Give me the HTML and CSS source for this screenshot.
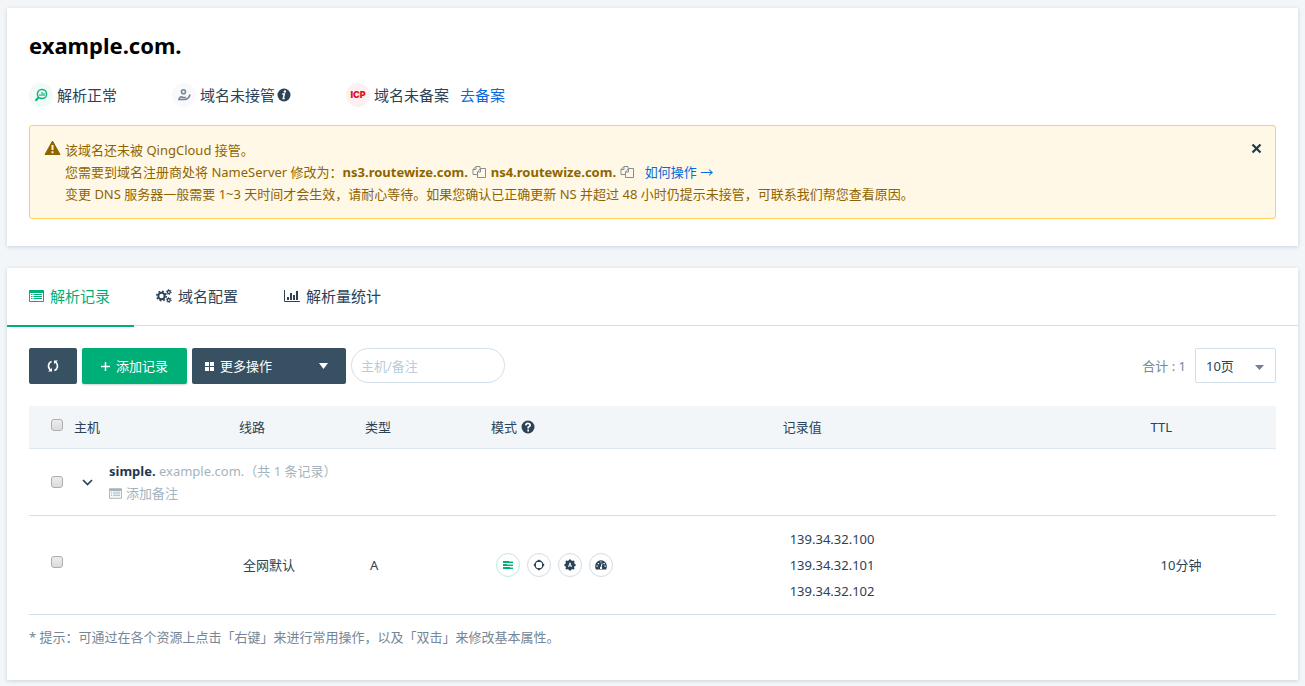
FILE: index.html
```html
<!DOCTYPE html>
<html lang="zh-CN">
<head>
<meta charset="utf-8">
<title>example.com. - 解析记录</title>
<link rel="stylesheet" href="styles.css">
</head>
<body>
<svg class="defs" aria-hidden="true">
  <symbol id="i-list" viewBox="0 0 15 12"><path fill="currentColor" fill-rule="evenodd" d="M1 0h13q1 0 1 1v10q0 1-1 1H1q-1 0-1-1V1q0-1 1-1zM1 3v8h13V3z"/><path stroke="currentColor" d="M2 4.500h1.500M4.500 4.500H13M2 6.500h1.500M4.500 6.500H13M2 8.500h1.500M4.500 8.500H13"/></symbol>
  <symbol id="i-copy" viewBox="0 0 14 14"><path fill="none" stroke="currentColor" stroke-linejoin="round" d="M4 1.500 1 4.500V9.500H5.500M4 1.500h4v2M4 1.500v3H1M8.500 3.500 5.500 7v5.500h8v-9zM8.500 3.500V7h-3"/></symbol>
</svg>

<main class="page">
  <section class="card domain">
    <h1 class="title">example.com.</h1>
    <ul class="statuses">
      <li class="status">
        <span class="status-icon ok"><svg width="14" height="14" viewBox="0 0 14 14" fill="none" stroke="currentColor"><circle cx="8" cy="6" r="4.600" stroke-width="1.500"/><path stroke-width="2" d="M4.700 9.300 1.500 12.700"/><path stroke-width="1.200" d="M6 8V6.200M8 8V4M10 8V5"/></svg></span>
        <span>解析正常</span>
      </li>
      <li class="status">
        <span class="status-icon idle"><svg width="14" height="14" viewBox="0 0 14 14" fill="none" stroke="currentColor" stroke-width="1.600"><circle cx="6.500" cy="3.700" r="2"/><path d="M1 11.500h7.500q3.500-1 4.500-5M2 10.500Q4 8 6 9.500h3"/></svg></span>
        <span>域名未接管</span>
        <svg class="info" width="14" height="14" viewBox="0 0 14 14"><circle cx="7" cy="7" r="6.500" fill="currentColor"/><circle cx="7.900" cy="3.500" r="1.200" fill="#fff"/><path d="M5.200 5.900h2.200L6.200 10.600h1.500" fill="none" stroke="#fff" stroke-width="1.500"/></svg>
      </li>
      <li class="status">
        <span class="status-icon icp">ICP</span>
        <span>域名未备案</span>
        <a class="file-link" href="#">去备案</a>
      </li>
    </ul>
    <div class="alert" role="alert">
      <svg class="alert-icon" width="17" height="16" viewBox="0 0 17 16"><path fill="currentColor" stroke="currentColor" stroke-linejoin="round" d="M8.500 1 16 14.500H1z"/><path d="M8.500 5v5M8.500 11.300v2" stroke="#fff8e6" stroke-width="2"/></svg>
      <div class="alert-text">
        <p>该域名还未被 QingCloud 接管。</p>
        <p>您需要到域名注册商处将 NameServer 修改为：<b>ns3.routewize.com.</b> <button class="copy" type="button" aria-label="复制"><svg width="14" height="14"><use href="#i-copy"/></svg></button> <b>ns4.routewize.com.</b> <button class="copy" type="button" aria-label="复制"><svg width="14" height="14"><use href="#i-copy"/></svg></button> <a class="howto" href="#">如何操作 →</a></p>
        <p>变更 DNS 服务器一般需要 1~3 天时间才会生效，请耐心等待。如果您确认已正确更新 NS 并超过 48 小时仍提示未接管，可联系我们帮您查看原因。</p>
      </div>
      <button class="close" type="button" aria-label="关闭"><svg width="11" height="11" viewBox="0 0 11 11"><path d="M1.500 1.500 9.500 9.500M9.500 1.500 1.500 9.500" stroke="currentColor" stroke-width="2.200"/></svg></button>
    </div>
  </section>

  <section class="card records">
    <nav class="tabs">
      <a class="tab active" href="#"><svg width="15" height="12"><use href="#i-list"/></svg>解析记录</a>
      <a class="tab" href="#"><svg width="16" height="14" viewBox="0 0 16 14" fill="none" stroke="currentColor"><circle cx="5.500" cy="7" r="3.200" stroke-width="2"/><circle cx="5.500" cy="7" r="4.700" stroke-width="1.600" stroke-dasharray="1.800 1.890"/><circle cx="12.800" cy="3" r="1.500" stroke-width="1.300"/><circle cx="12.800" cy="3" r="2.500" stroke-dasharray="1.200 1.420"/><circle cx="12.800" cy="11" r="1.500" stroke-width="1.300"/><circle cx="12.800" cy="11" r="2.500" stroke-dasharray="1.200 1.420"/></svg>域名配置</a>
      <a class="tab" href="#"><svg width="16" height="12" viewBox="0 0 16 12" fill="none" stroke="currentColor"><path d="M.5 0v11.500H16"/><path stroke-width="2" d="M4 10V7M7 10V3M10 10V5M13 10V1"/></svg>解析量统计</a>
    </nav>

    <div class="content">
      <div class="toolbar">
        <button class="btn refresh" type="button" aria-label="刷新"><svg width="12" height="12" viewBox="0 0 12 12" fill="none" stroke="currentColor" stroke-width="1.700"><path d="M4.600 1.500C1.200 2.600.2 7 3.300 10M7.400 10.500C10.800 9.400 11.800 5 8.700 2"/><path fill="currentColor" stroke="none" d="M5 11.500H1l4-3.600zM7 .5h4L7 4.100z"/></svg></button>
        <button class="btn add" type="button"><svg width="9" height="9" viewBox="0 0 9 9"><path d="M4.500 0v9M0 4.500h9" stroke="currentColor" stroke-width="1.500"/></svg>添加记录</button>
        <button class="btn more" type="button"><svg width="9" height="9" viewBox="0 0 9 9"><path fill="currentColor" d="M0 0h4v4H0zM5 0h4v4H5zM0 5h4v4H0zM5 5h4v4H5z"/></svg><span>更多操作</span><svg class="caret" width="9" height="6" viewBox="0 0 9 6"><path fill="currentColor" d="M0 0h9L4.500 6z"/></svg></button>
        <input class="search" type="text" placeholder="主机/备注" aria-label="主机/备注">
        <label class="total" for="page-size">合计 : 1</label>
        <span class="select-wrap">
          <select class="page-size" id="page-size"><option>10页</option><option>20页</option><option>50页</option></select>
          <svg class="select-caret" width="9" height="5" viewBox="0 0 9 5"><path fill="currentColor" d="M0 0h9L4.500 5z"/></svg>
        </span>
      </div>

      <table class="table">
        <colgroup><col class="c-host"><col class="c-line"><col class="c-type"><col class="c-mode"><col class="c-value"><col class="c-ttl"></colgroup>
        <thead>
          <tr>
            <th><span class="host-head"><input class="check" type="checkbox" aria-label="全选"><span>主机</span></span></th>
            <th>线路</th>
            <th>类型</th>
            <th><span class="mode-head">模式<svg width="14" height="14" viewBox="0 0 14 14"><circle cx="7" cy="7" r="6.500" fill="currentColor"/><path d="M4.800 5.400Q5 3.300 7 3.400T9.200 5.200Q9.200 6.300 7.200 7.200V8.600M7.200 9.500v1.900" fill="none" stroke="#fff" stroke-width="1.700"/></svg></span></th>
            <th>记录值</th>
            <th>TTL</th>
          </tr>
        </thead>
        <tbody>
          <tr class="group">
            <td colspan="6">
              <div class="group-line">
                <input class="check" type="checkbox" aria-label="选择 simple.">
                <button class="toggle" type="button" aria-label="收起"><svg width="11" height="7" viewBox="0 0 11 7"><path d="M1 1l4.500 4.500L10 1" fill="none" stroke="currentColor" stroke-width="1.700"/></svg></button>
                <div class="group-info">
                  <div><b>simple.</b> example.com.（共 1 条记录）</div>
                  <button class="note" type="button"><svg width="13" height="11"><use href="#i-list"/></svg>添加备注</button>
                </div>
              </div>
            </td>
          </tr>
          <tr class="record">
            <td class="d-check"><input class="check" type="checkbox" aria-label="选择记录"></td>
            <td class="d-line">全网默认</td>
            <td class="d-type">A</td>
            <td class="d-mode">
              <div class="modes">
                <button class="mode on" type="button" aria-label="列表"><svg width="12" height="10" viewBox="0 0 12 10"><path fill="currentColor" d="M1 1h10v2H1zM1 4h10v2H1zM1 7h10v2H1z"/><path fill="#8fdcc0" d="M7 1h4v1H7zM5 4h6v1H5zM8 7h3v1H8z"/></svg></button>
                <button class="mode" type="button" aria-label="轮询"><svg width="12" height="12" viewBox="0 0 12 12"><circle cx="6" cy="6" r="4" fill="none" stroke="currentColor" stroke-width="1.300"/><path fill="currentColor" d="M4 3 6 .3 8 3zM4 9l2 2.700L8 9zM3 4v4L.3 6zM9 4v4l2.700-2z"/></svg></button>
                <button class="mode" type="button" aria-label="自动"><svg width="12" height="12" viewBox="0 0 12 12"><circle cx="6" cy="6" r="4.800" fill="currentColor"/><path d="M6 .4v11.200M.4 6h11.200M2 2l8 8M10 2l-8 8" stroke="currentColor" stroke-width="2"/><path d="M4.500 8 6 3.800 7.500 8M5 6.800h2" fill="none" stroke="#fff" stroke-width=".9"/></svg></button>
                <button class="mode" type="button" aria-label="性能"><svg width="12" height="10" viewBox="0 0 12 10"><path fill="currentColor" d="M1 9.500Q0 8 .2 6A5.800 5.800 0 0 1 11.800 6Q12 8 11 9.500z"/><path stroke="#fff" fill="none" d="M5.900 7.500 7.100 3.500"/><path fill="#fff" d="M5 7h2v2H5zM1.500 5.500h1.300v1.300H1.500zM2.800 2.900h1.300v1.300H2.800zM5.300 1.500h1.300v1H5.300zM8.500 2.900h1.300v1.300H8.500zM9.500 5.500h1.300v1.300H9.500z"/></svg></button>
              </div>
            </td>
            <td class="d-value">139.34.32.100<br>139.34.32.101<br>139.34.32.102</td>
            <td class="d-ttl">10分钟</td>
          </tr>
        </tbody>
      </table>
      <p class="tip">* 提示：可通过在各个资源上点击「右键」来进行常用操作，以及「双击」来修改基本属性。</p>
    </div>
  </section>
</main>
</body>
</html>
```
FILE: styles.css
```css
* { box-sizing: border-box; }

body {
  margin: 0;
  background: #f3f6f9;
  color: #2b4257;
  font: 13px/22px "Noto Sans", "Noto Sans CJK SC", sans-serif;
}

p, h1, ul { margin: 0; padding: 0; }
a { color: #0969da; text-decoration: none; }
svg { flex: none; }
button, input, select { font: inherit; color: inherit; margin: 0; }
button { padding: 0; border: 0; background: none; cursor: pointer; }

.defs { position: absolute; width: 0; height: 0; }

.page {
  display: flex;
  flex-direction: column;
  gap: 22px;
  padding: 8px 7px 6px;
}

.card {
  background: #fff;
  box-shadow: 0 1px 4px rgba(55, 85, 115, 0.22);
}

/* Domain summary */
.domain { padding: 21px 22px 27px; }

.title {
  color: #000;
  font-size: 22px;
  line-height: 32px;
  font-weight: 700;
}

.statuses {
  display: flex;
  gap: 55px;
  margin: 22px 0 18px;
  list-style: none;
  font-size: 15px;
  line-height: 24px;
}

.status { display: flex; align-items: center; }
.status-icon {
  display: flex;
  align-items: center;
  justify-content: center;
  width: 24px;
  height: 24px;
  margin-right: 4px;
  border-radius: 50%;
}
.ok { color: #12b07c; background: #f0faf6; }
.idle { color: #758696; background: #f8f9fb; }
.icp {
  color: #e3141b;
  background: #fdf0f0;
  font: 900 9px/24px Inter, sans-serif;
}
.info { margin-left: 2px; }
.file-link { margin-left: 11px; }

.alert {
  display: flex;
  align-items: flex-start;
  padding: 13px;
  border: 1px solid #ffcf5c;
  border-radius: 3px;
  background: #fff8e6;
  color: #8f6400;
}
.alert-icon { margin: 1px 4px 0 1px; }
.alert-text { flex: 1; }
.alert-text b { font-weight: 700; }
.copy { margin: 0 1px; color: #888d92; vertical-align: -2px; line-height: 14px; }
.copy svg { display: block; }
.howto { margin-left: 6px; }
.close { color: #1c3a50; padding: 4px 0; line-height: 0; }

/* Tabs */
.tabs {
  display: flex;
  height: 58px;
  border-bottom: 1px solid #d5dee7;
  font-size: 15px;
}
.tab {
  display: flex;
  align-items: center;
  gap: 6px;
  height: 59px;
  padding: 0 24px 2px 22px;
  border-bottom: 2px solid transparent;
  color: inherit;
}
.active { color: #00ae77; border-color: #00ae77; }

/* Toolbar */
.content { padding: 22px 22px 32px; }
.toolbar {
  display: flex;
  gap: 5px;
  margin-bottom: 22px;
}
.btn {
  display: flex;
  align-items: center;
  justify-content: center;
  gap: 6px;
  height: 36px;
  border-radius: 2px;
  background: #375062;
  color: #fff;
}
.refresh { width: 48px; }
.add {
  width: 105px;
  background: #00ae77;
  box-shadow: 0 1px 2px rgba(0, 60, 40, 0.2);
}
.more {
  width: 154px;
  padding: 0 18px 0 13px;
}
.caret { margin-left: auto; }

.search {
  width: 154px;
  height: 35px;
  padding: 0 9px;
  border: 1px solid #d3dfe8;
  border-radius: 18px;
  outline: 0;
  background: #fff;
}
.search::placeholder { color: #b8cddb; opacity: 1; }

.total {
  margin-left: auto;
  padding-right: 4px;
  color: #758696;
  line-height: 36px;
}
.select-wrap { position: relative; width: 81px; height: 35px; }
.page-size {
  width: 100%;
  height: 35px;
  padding: 0 10px;
  border: 1px solid #d3dfe8;
  border-radius: 2px;
  background: #fff;
  appearance: none;
}
.select-caret {
  position: absolute;
  top: 17px;
  right: 12px;
  color: #6f8192;
  pointer-events: none;
}

/* Record table */
.table {
  width: 100%;
  table-layout: fixed;
  border-spacing: 0;
}
.c-host { width: 16.200%; }
.c-line { width: 10.100%; }
.c-type { width: 10.100%; }
.c-mode { width: 23.400%; }
.c-value { width: 29.500%; }
.c-ttl { width: 10.700%; }

.table th {
  height: 43px;
  padding: 0 8px;
  border-bottom: 1px solid #dfe8f0;
  background: #f3f6f9;
  font-weight: 400;
  text-align: left;
}
.table td { border-bottom: 1px solid #d3dfe8; }
.check {
  display: block;
  width: 12px;
  height: 12px;
  border: 1px solid #adadad;
  border-radius: 3px;
  background: linear-gradient(#ececec, #dcdcdc);
  appearance: none;
}
.host-head { display: flex; gap: 11px; padding-left: 14px; }
.host-head .check { margin-top: 3px; }
.mode-head { display: flex; align-items: center; gap: 4px; }

.group td { padding: 11px 22px; }
.group-line { display: flex; align-items: center; }
.toggle { margin: 0 16px 0 19px; line-height: 0; }
.group-info { color: #a3b4be; }
.group-info b { color: #1f3a50; font-weight: 700; }
.note {
  display: flex;
  align-items: center;
  gap: 4px;
  line-height: 22px;
}

.record td { padding-top: 10px; padding-bottom: 10px; line-height: 26px; }
.record .d-check { padding: 0 22px 6px; }
.record .d-line { padding-left: 12px; }
.record .d-type { padding-left: 13px; }
.record .d-mode { padding-left: 13px; }
.record .d-value { padding-left: 15px; }
.record .d-ttl { padding-left: 18px; }

.modes { display: flex; gap: 7px; }
.mode {
  display: flex;
  align-items: center;
  justify-content: center;
  width: 24px;
  height: 24px;
  border: 1px solid #cfdde8;
  border-radius: 50%;
}
.on { color: #00ae77; border-color: #bcebd9; }

.tip { margin-top: 11px; color: #758696; }
```
